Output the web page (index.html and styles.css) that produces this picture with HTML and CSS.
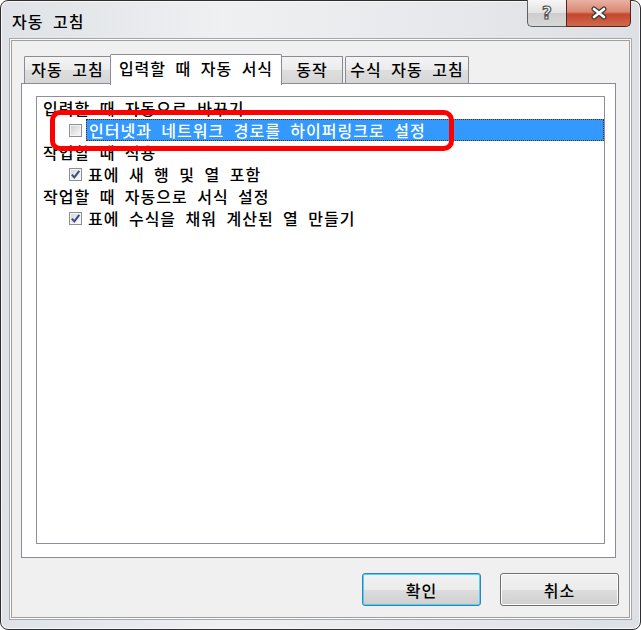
FILE: index.html
```html
<!DOCTYPE html>
<html lang="ko">
<head>
  <meta charset="UTF-8">
  <title>자동 고침</title>
  <link rel="stylesheet" href="styles.css">
</head>
<body>
  <div class="window">
    <div class="titlebar">
      <span class="title">자동 고침</span>
      <div class="caption">
        <span class="cap-btn help"><span class="help-glyph">?</span></span>
        <span class="cap-btn close">
          <svg width="18" height="14" viewBox="0 0 18 14">
            <path d="M4 3 L14 11 M14 3 L4 11" stroke="#3b3b3b" stroke-width="5" stroke-linecap="round"/>
            <path d="M4 3 L14 11 M14 3 L4 11" stroke="#ffffff" stroke-width="2.6" stroke-linecap="round"/>
          </svg>
        </span>
      </div>
    </div>

    <div class="client">
      <div class="tabs">
        <div class="tab first">자동 고침</div>
        <div class="tab active">입력할 때 자동 서식</div>
        <div class="tab third">동작</div>
        <div class="tab last">수식 자동 고침</div>
      </div>

      <div class="panel">
        <div class="tree">
          <div class="heading">입력할 때 자동으로 바꾸기</div>
          <div class="item">
            <span class="check"></span>
            <span class="label selected">인터넷과 네트워크 경로를 하이퍼링크로 설정</span>
          </div>
          <div class="heading">작업할 때 적용</div>
          <div class="item">
            <span class="check checked">
              <svg width="11" height="11" viewBox="0 0 11 11"><path d="M1.8 5.6 L4.3 8.4 L9.3 1.8" fill="none" stroke="#3c4f86" stroke-width="2"/></svg>
            </span>
            <span class="label">표에 새 행 및 열 포함</span>
          </div>
          <div class="heading">작업할 때 자동으로 서식 설정</div>
          <div class="item">
            <span class="check checked">
              <svg width="11" height="11" viewBox="0 0 11 11"><path d="M1.8 5.6 L4.3 8.4 L9.3 1.8" fill="none" stroke="#3c4f86" stroke-width="2"/></svg>
            </span>
            <span class="label">표에 수식을 채워 계산된 열 만들기</span>
          </div>
        </div>
      </div>

      <div class="actions">
        <button class="btn default">확인</button>
        <button class="btn">취소</button>
      </div>
    </div>

    <!-- Markierung über der ersten Option -->
    <div class="callout"></div>
  </div>
</body>
</html>
```

FILE: styles.css
```css
body {
  margin: 0; background: #ffffff;
  font-family: "Noto Sans CJK KR", "Liberation Sans", sans-serif; font-size: 16px; font-weight: 500;
  letter-spacing: 1px; word-spacing: 4px; color: #000;
}
.window {
  position: relative; width: 641px; height: 630px; box-sizing: border-box;
  border: 1px solid #2e2e2e; border-radius: 8px;
  background: linear-gradient(to right, #dfe2e6, #eef0f2 35%, #e6e8eb 70%, #dde0e4);
  box-shadow: inset 0 0 0 1px #f7f7f7;
  display: flex; flex-direction: column;
  padding: 0 10px 11px 10px;
}
.titlebar {
  height: 39px; display: flex; justify-content: space-between; align-items: flex-start;
  margin-right: -1px;
}
.title { padding: 9px 0 0 1px; line-height: 22px; }
.caption { display: flex; margin-top: -1px; }
.cap-btn {
  height: 27px; box-sizing: border-box; display: flex; align-items: center; justify-content: center;
  border: 1px solid #5f5f5f; border-top: none;
}
.help {
  width: 39px; border-radius: 0 0 0 5px; border-right: none;
  background: linear-gradient(#f6f6f6, #e2e2e2 50%, #cdcdcd 51%, #d8d8d8);
}
.help-glyph {
  font-family: "DejaVu Sans", sans-serif; font-weight: bold; font-size: 17px; line-height: 17px; letter-spacing: 0;
  color: #f4f4f4; -webkit-text-stroke: 1.2px #555;
}
.close {
  width: 65px; border-radius: 0 0 5px 0; border-color: #55241b;
  background: linear-gradient(#eab1a4, #d98873 45%, #c5462f 55%, #cf6a4e);
}
.client {
  height: 578px; box-sizing: border-box; background: #f0f0f0;
  border: 1px solid #a0a0a0; box-shadow: 0 0 0 1px #fbfbfb, 0 0 0 2px #a8a8a8;
  padding: 12px 0 0 9px; display: flex; flex-direction: column;
}
.tabs { display: flex; align-items: flex-end; height: 31px; padding-left: 3px; }
.tab {
  box-sizing: border-box; height: 27px; margin-bottom: 1px; border: 1px solid #898c95; border-bottom: none;
  background: linear-gradient(#f4f4f4, #ebebeb 50%, #dedede 51%, #d6d6d6);
  text-align: center; line-height: 24px; white-space: nowrap;
}
.tab.first { width: 86px; border-right: none; border-radius: 2px 0 0 0; }
.tab.active {
  position: relative; z-index: 1; width: 172px; height: 31px; margin-bottom: -1px;
  background: #fff; line-height: 26px; padding-bottom: 4px; border-radius: 2px 2px 0 0;
}
.tab.third { width: 61px; border-left: none; }
.tab.last { width: 124px; margin-left: 2px; border-radius: 2px 2px 0 0; }
.panel {
  width: 595px; height: 475px; box-sizing: border-box; margin-top: -1px;
  background: #fff; border: 1px solid #898c95; padding: 12px 10px 13px 14px;
}
.tree { height: 100%; box-sizing: border-box; border: 1px solid #8d9096; background: #fff; }
.heading { height: 22px; line-height: 22px; padding-left: 6px; white-space: nowrap; }
.item { height: 22px; display: flex; align-items: center; padding-left: 32px; }
.check {
  width: 13px; height: 13px; box-sizing: border-box; flex: none;
  border: 1px solid #8e8f8f; box-shadow: inset 0 0 0 1px #f4f4f4;
  background: linear-gradient(135deg, #c9cbcf, #eeeeee 70%, #fbfbfb);
  display: flex; align-items: center; justify-content: center;
}
.check.checked { background: linear-gradient(135deg, #d4d6da, #f2f2f2 70%, #fff); }
.label { margin-left: 4px; padding-left: 2px; line-height: 20px; white-space: nowrap; }
.label.selected {
  flex: 1; background: #3399ff; color: #fff; border: 1px dotted #4a2f10;
}
.actions { display: flex; justify-content: flex-end; gap: 19px; margin: 15px 10px 0 0; }
.btn {
  width: 119px; height: 33px; box-sizing: border-box; font: inherit; color: #000;
  letter-spacing: 1px; word-spacing: 4px;
  border: 1px solid #707070; border-radius: 3px; box-shadow: inset 0 0 0 1px #fcfcfc;
  background: linear-gradient(#f2f2f2, #ebebeb 50%, #dddddd 51%, #cfcfcf);
}
.btn.default { border-color: #3c7fb1; box-shadow: inset 0 0 0 1px #48d3fb; }
.callout {
  position: absolute; left: 49px; top: 109px; width: 404px; height: 41px; box-sizing: border-box;
  border: 5px solid #ff0000; border-radius: 10px;
}
```
